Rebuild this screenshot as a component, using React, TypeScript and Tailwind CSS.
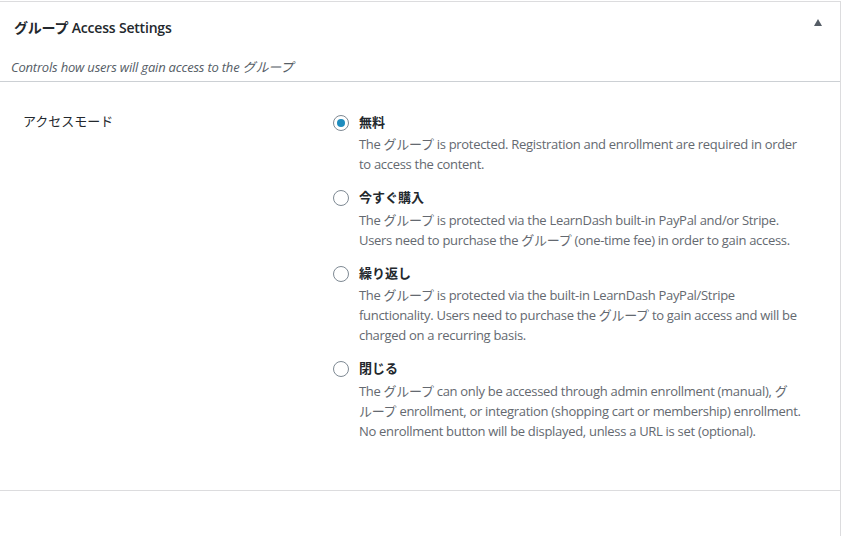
const FONT = "font-['Segoe_UI','Open_Sans','Noto_Sans_CJK_JP',sans-serif]"

type Option = { label: string; lines: string[]; checked?: boolean }

const options: Option[] = [
  {
    label: '無料',
    checked: true,
    lines: [
      'The グループ is protected. Registration and enrollment are required in order',
      'to access the content.',
    ],
  },
  {
    label: '今すぐ購入',
    lines: [
      'The グループ is protected via the LearnDash built-in PayPal and/or Stripe.',
      'Users need to purchase the グループ (one-time fee) in order to gain access.',
    ],
  },
  {
    label: '繰り返し',
    lines: [
      'The グループ is protected via the built-in LearnDash PayPal/Stripe',
      'functionality. Users need to purchase the グループ to gain access and will be',
      'charged on a recurring basis.',
    ],
  },
  {
    label: '閉じる',
    lines: [
      'The グループ can only be accessed through admin enrollment (manual), グ',
      'ループ enrollment, or integration (shopping cart or membership) enrollment.',
      'No enrollment button will be displayed, unless a URL is set (optional).',
    ],
  },
]

function Radio({ checked }: { checked?: boolean }) {
  return (
    <span className="mt-[2px] flex h-4 w-4 shrink-0 items-center justify-center rounded-full border border-[#7e8993] bg-white">
      {checked && <span className="h-2 w-2 rounded-full bg-[#1e8cbe]" />}
    </span>
  )
}

export default function App() {
  return (
    <div className={`min-h-screen bg-white pt-px ${FONT}`}>
      <div className="min-h-[535px] w-[841px] border-r border-t border-[#dcdcde]">
        <div className="flex h-[50px] items-center justify-between pl-[14px] pr-[18px]">
          <h2 className="text-[14px] font-semibold tracking-[-0.2px] text-[#23282d]">グループ Access Settings</h2>
          <svg width="8" height="7" viewBox="0 0 8 7" className="mb-[10px]">
            <polygon points="4,0 8,7 0,7" fill="#555d66" />
          </svg>
        </div>
        <p className="border-b border-[#ccd0d4] pb-[4px] pl-[11px] pt-[6px] text-[13px] leading-[19px] italic tracking-[-0.2px] text-[#555d66]">
          Controls how users will gain access to the グループ
        </p>
        <div className="flex pb-[49px] pt-[30px]">
          <div className="w-[333px] pl-[23px] text-[13px] leading-[19px] text-[#23282d]">アクセスモード</div>
          <div className="flex flex-col gap-[14px] pt-[0.5px]">
            {options.map((o) => (
              <div key={o.label} className="flex gap-[10px]">
                <Radio checked={o.checked} />
                <div>
                  <div className="text-[13px] font-semibold leading-[19.5px] text-[#23282d]">{o.label}</div>
                  <div className="mt-[2px] text-[13px] leading-[20px] tracking-[-0.3px] text-[#646970]">
                    {o.lines.map((l) => (
                      <div key={l} className="whitespace-nowrap">
                        {l}
                      </div>
                    ))}
                  </div>
                </div>
              </div>
            ))}
          </div>
        </div>
        <div className="border-t border-[#dcdcde]" />
      </div>
    </div>
  )
}
